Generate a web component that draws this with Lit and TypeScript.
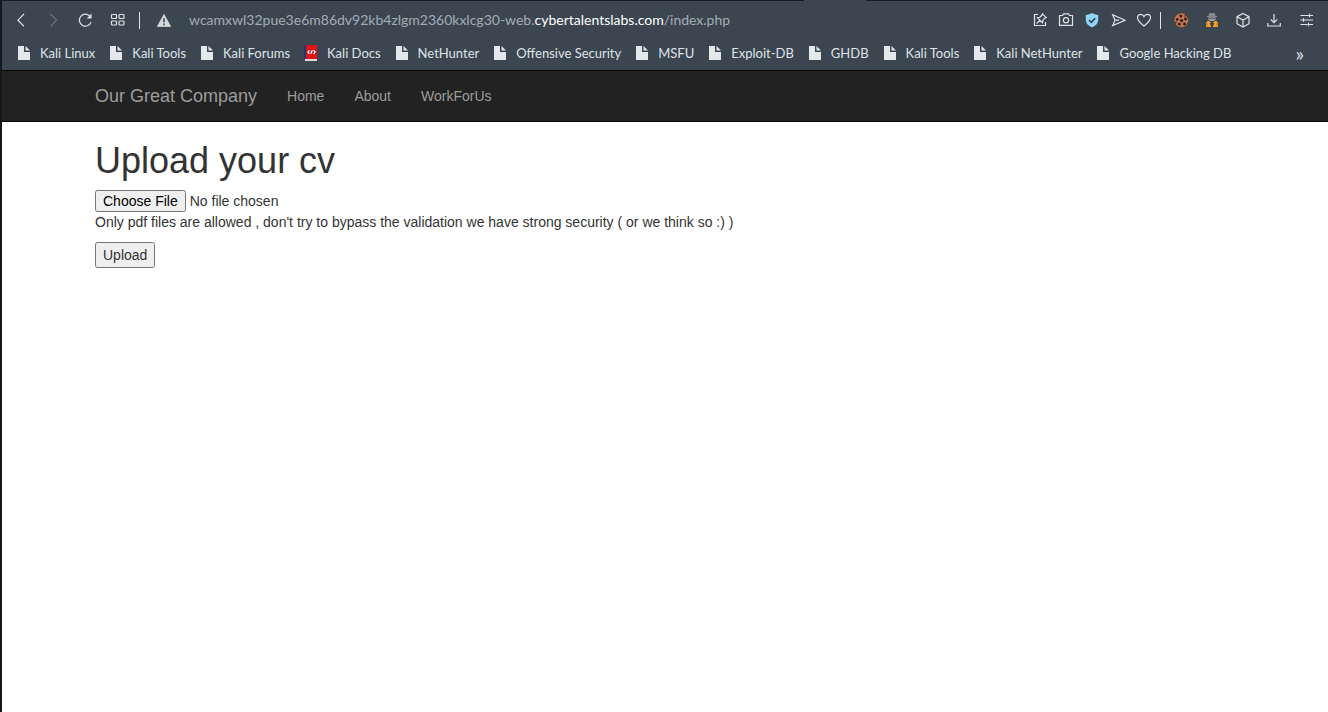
import { LitElement, html, css, svg, TemplateResult, SVGTemplateResult } from "lit";
import { customElement } from "lit/decorators.js";

const icons: Record<string, SVGTemplateResult> = {
  back: svg`<path d="M11 2 5 8.2 11 14.4"/>`,
  forward: svg`<path d="M5.500 2l6 6.2-6 6.2"/>`,
  reload: svg`<path d="M14 10.300A6 6 0 1 1 12.600 3.900"/><path d="M14.500 1.500v5H9.800Z" fill="currentColor" stroke="none"/>`,
  grid: svg`<rect x="2.5" y="2.5" width="5" height="4" rx=".8"/><rect x="10" y="2.5" width="5" height="4" rx=".8"/><rect x="2.5" y="9" width="5" height="4" rx=".8"/><rect x="10" y="9" width="5" height="4" rx=".8"/>`,
  warning: svg`<path d="M8 2.5 14.6 14.4H1.4Z" fill="#d6dbda" stroke="#d6dbda" stroke-width=".8" stroke-linejoin="round"/><path d="M8 6.2v4M8 11.5v1.7" stroke="#3b4651" stroke-width="1.6"/>`,
  pin: svg`<path d="M6 2.5H2.5v11h11V10"/><path d="M10.500 1.800 14.200 5.600 12.700 6.200 10.800 8.400 10.500 10.800 5.400 5.700 7.800 5.300 9.900 3.300ZM7.800 8.300 4.600 11.5"/>`,
  camera: svg`<path d="M4.500 3.500 5.500 1.800h5l1 1.700h3v9.800h-13V3.500Z"/><circle cx="8" cy="8.3" r="2.6"/>`,
  shield: svg`<path d="M8 1c2 1.300 3.800 1.700 6.200 1.900V8c0 3.700-2.700 5.900-6.200 7.300-3.500-1.400-6.200-3.600-6.200-7.300V2.900C4.200 2.700 6 2.300 8 1Z" fill="#8fd5fb" stroke="none"/><path d="m5 8 2.300 2.300L11.200 6.200" stroke="#33404c" stroke-width="1.600"/>`,
  send: svg`<path d="M2.700 2.800 15 8.200 2.700 13.600 5 8.200ZM5 8.200h4"/>`,
  heart: svg`<path d="M8 14C4.500 11.200 1.500 8.700 1.500 5.700 1.500 3.600 3 2.300 4.700 2.300 6.300 2.300 7.400 3.200 8 4.500 8.600 3.200 9.700 2.300 11.300 2.300 13 2.300 14.500 3.600 14.500 5.700c0 3-3 5.500-6.500 8.300Z"/>`,
  cookie: svg`<path d="M8.500 1 C10 .8 11.500 1.400 12.800 2.700L11 4.200 13.500 4 15.300 6.500C16 11 13 15.200 8.600 15.500 6 15.600 3.500 14.200 2 12L4 10.400 1 9.400C.7 5 4 1.200 8.500 1Z" fill="#c9764f" stroke="#4b2d24" stroke-width=".5"/><g fill="#241b19" stroke="none"><circle cx="7.800" cy="4" r="1.500"/><circle cx="12.500" cy="7" r="1.400"/><circle cx="4.300" cy="7.500" r="1.400"/><circle cx="8.600" cy="8.500" r="1.500"/><circle cx="6.300" cy="12.200" r="1.400"/><circle cx="11.500" cy="12" r="1.400"/></g>`,
  agent: svg`<g stroke="none"><path d="M5.200 1h1.800l1 .6 1-.6h1.800L11.500 4H13v1.200H3V4h1.500Z" fill="#858789"/><path d="M4.500 5.200h7v2L10 9H6L4.500 7.200Z" fill="#9b9d9f"/><path d="M5 5.800h6v1H5Z" fill="#5b6066"/><path d="M4 8.500 7 10.200 5.800 11.500 7.200 15H2v-4Z M12 8.500 9 10.200l1.200 1.300L8.800 15H14v-4Z" fill="#f6a02d"/><path d="M2 11 3.500 10.500 4.500 13 3 15H2ZM14 11 12.500 10.500 11.500 13 13 15H14Z" fill="#e58a1c"/></g>`,
  cube: svg`<path d="M8 1.500 14 4.700v7L8 15l-6-3.300v-7ZM2 4.700 8 8l6-3.300M8 8v7"/>`,
  download: svg`<path d="M8 2v8.500M4.700 7.300 8 10.600l3.300-3.300M1.800 11v3h12.500v-3"/>`,
  sliders: svg`<path d="M3.500 3.500H16M3.500 8H16M3.500 12.500H16M12.500 1.800v3.400M6.500 6.300v3.400M11.500 10.800v3.400"/>`,
  file: svg`<path d="M2 1h6v6h6v8H2Z" fill="#e4e8eb" stroke="none"/><path d="M9.500 1 14 5.500H9.500Z" fill="#e4e8eb" stroke="none"/>`,
  docs: svg`<g stroke="none"><path d="M1.500 0h3v14h-3Z" fill="#123878"/><path d="M3 0h11v14H3Z" fill="#db1518"/><path d="M2 14h12v2H2Z" fill="#e6d7d7"/></g><path d="M6.300 5.300 4.900 7.300l1.400 1.500M10.600 5.300l1.500 1.500-1.500 2M7.700 8.800 9.300 5.300" stroke="#fff" stroke-width="1.300"/>`,
};

const icon = (name: string): TemplateResult =>
  html`<svg class="icon" viewBox="0 0 16 16" aria-hidden="true">${icons[name]}</svg>`;

const bookmarks = [
  "Kali Linux", "Kali Tools", "Kali Forums", "Kali Docs", "NetHunter", "Offensive Security",
  "MSFU", "Exploit-DB", "GHDB", "Kali Tools", "Kali NetHunter", "Google Hacking DB",
];

@customElement("browser-chrome")
class BrowserChrome extends LitElement {
  static styles = css`
    :host {
      display: block;
      position: relative;
      background: #3b4651;
      border-top: 1px solid #191a22;
      color: #dfe3e6;
      font-family: Lato, "Noto Sans", sans-serif;
    }
    .tab {
      position: absolute;
      top: -1px;
      left: 802px;
      width: 62px;
      height: 1px;
      background: #3b4651;
    }
    .toolbar { display: flex; align-items: center; height: 38px; padding: 0 15px 0 11px; }
    .group { display: flex; align-items: center; gap: 16px; }
    .actions { gap: 10px; }
    .extensions { gap: 15px; }
    .tool { display: flex; border: 0; padding: 0; background: none; color: inherit; }
    .tool:disabled { opacity: 0.3; }
    .icon { width: 16px; height: 16px; fill: none; stroke: currentColor; stroke-width: 1.2; flex: none; }
    .line { width: 1px; height: 17px; background: #dfe3e6; flex: none; }
    .line.start { margin: 0 16px 0 14px; }
    .line.end { margin: 0 12px 0 8px; }
    .address { flex: 1; min-width: 0; margin-left: 17px; font-size: 14px; line-height: 20px; color: #a4acb4; white-space: nowrap; overflow: hidden; }
    .domain { color: #fff; }
    .bookmarks { display: flex; align-items: center; height: 27px; padding: 0 24px 4px 14px; }
    .list { display: flex; flex: 1; min-width: 0; gap: 13px; overflow: hidden; }
    .bookmark { display: flex; align-items: center; gap: 8px; font-size: 13px; line-height: 20px; color: inherit; text-decoration: none; white-space: nowrap; }
    .more { border: 0; padding: 0; background: none; color: inherit; font: inherit; font-size: 20px; line-height: 20px; }
  `;

  private tool(name: string, label: string, disabled = false) {
    return html`<button class="tool" aria-label=${label} ?disabled=${disabled}>${icon(name)}</button>`;
  }

  render() {
    return html`
      <div class="tab"></div>
      <div class="toolbar">
        <div class="group">
          ${this.tool("back", "Back")}${this.tool("forward", "Forward", true)}
          ${this.tool("reload", "Reload")}${this.tool("grid", "Speed Dial")}
        </div>
        <span class="line start"></span>
        ${this.tool("warning", "Site information")}
        <div class="address">wcamxwl32pue3e6m86dv92kb4zlgm2360kxlcg30-web.<span class="domain">cybertalentslabs.com</span>/index.php</div>
        <div class="group actions">
          ${this.tool("pin", "Pin page")}${this.tool("camera", "Snapshot")}
          ${this.tool("shield", "Protection")}${this.tool("send", "Send")}${this.tool("heart", "Favourite")}
        </div>
        <span class="line end"></span>
        <div class="group extensions">
          ${this.tool("cookie", "Cookies")}${this.tool("agent", "User agent")}
          ${this.tool("cube", "Extensions")}${this.tool("download", "Downloads")}${this.tool("sliders", "Easy setup")}
        </div>
      </div>
      <nav class="bookmarks" aria-label="Bookmarks">
        <div class="list">
          ${bookmarks.map((name) => html`<a class="bookmark" href="#">${icon(name === "Kali Docs" ? "docs" : "file")}${name}</a>`)}
        </div>
        <button class="more" aria-label="More bookmarks">»</button>
      </nav>
    `;
  }
}

@customElement("app-root")
class AppRoot extends LitElement {
  static styles = css`
    :host {
      display: block;
      box-sizing: border-box;
      min-height: 100vh;
      border-left: 2px solid #14181d;
      background: #fff;
      color: #333;
      font-family: "Liberation Sans", Arial, sans-serif;
      font-size: 14px;
      line-height: 20px;
    }
    .navbar { background: #222; border: solid #080808; border-width: 1px 0; }
    .container { max-width: 1140px; margin: 0 auto; padding: 0 15px; }
    .menu { display: flex; align-items: center; gap: 30px; height: 50px; }
    .menu a { color: #9d9d9d; text-decoration: none; }
    .menu .brand { font-size: 18px; }
    h1 { margin: 20px 0 10px; font-size: 36px; line-height: 38px; font-weight: 500; }
    .file { display: block; font: inherit; line-height: 20px; color: inherit; }
    p { margin: 0 0 10px; }
    .upload { margin: 0; font: inherit; color: inherit; }
  `;

  render() {
    return html`
      <browser-chrome></browser-chrome>
      <header class="navbar">
        <nav class="container menu">
          <a class="brand" href="#">Our Great Company</a>
          <a href="#">Home</a>
          <a href="#">About</a>
          <a href="#">WorkForUs</a>
        </nav>
      </header>
      <main class="container">
        <h1><label for="cv">Upload your cv</label></h1>
        <form @submit=${(e: Event) => e.preventDefault()}>
          <input class="file" id="cv" type="file" accept="application/pdf" />
          <p>Only pdf files are allowed , don't try to bypass the validation we have strong security ( or we think so :) )</p>
          <button class="upload" type="submit">Upload</button>
        </form>
      </main>
    `;
  }
}
